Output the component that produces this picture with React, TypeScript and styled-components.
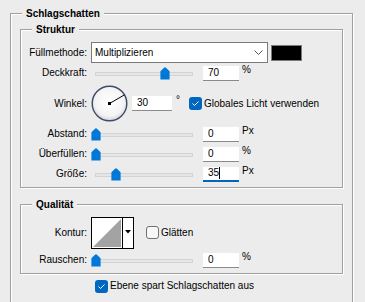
import React from 'react';
import styled, { createGlobalStyle } from 'styled-components';

const GlobalStyle = createGlobalStyle`
  html, body {
    margin: 0;
    padding: 0;
    overflow: hidden;
    background: #ececec;
  }

  body {
    font-family: 'Liberation Sans', Arial, sans-serif;
    font-size: 10px;
    color: #000;
  }
`;

const Panel = styled.div`
  width: 365px;
  box-sizing: border-box;
  padding: 7px 12px 0 10px;
`;

const Group = styled.fieldset<{ $inner?: boolean; $pad: string; $top?: number }>`
  margin: ${(p) => (p.$inner ? `${p.$top ?? 0}px 9px 0` : '0')};
  padding: ${(p) => p.$pad};
  border: 1px solid #a0a0a0;
  box-shadow: 1px 1px 0 #fff, inset 1px 1px 0 #fff;
  min-inline-size: 0;
`;

const Legend = styled.legend`
  margin-left: 11px;
  padding: 0 4px;
  font-weight: bold;
  line-height: 13px;
  background: #ececec;
`;

const Row = styled.div<{ $h: number }>`
  display: grid;
  grid-template-columns: 66px auto;
  column-gap: 4px;
  align-items: center;
  height: ${(p) => p.$h}px;
`;

const Label = styled.span`
  text-align: right;
  white-space: nowrap;
  line-height: 12px;
`;

const Controls = styled.div`
  display: flex;
  align-items: center;
`;

const Select = styled.div`
  width: 177px;
  height: 21px;
  box-sizing: border-box;
  border: 1px solid #7a7a7a;
  background: #fff;
  display: flex;
  align-items: center;
  justify-content: space-between;
  padding: 0 4px 0 3px;
  margin-right: 3px;
`;

const Swatch = styled.div`
  width: 31px;
  height: 16px;
  box-sizing: border-box;
  border: 1px solid #7a7a7a;
  background: #000;
`;

const SliderBox = styled.div`
  position: relative;
  width: 106px;
  height: 13px;
  margin-right: 6px;
  display: flex;
  align-items: flex-start;
  padding: 5px 4px 0;
  box-sizing: border-box;
`;

const Track = styled.div`
  flex: 1;
  height: 4px;
  box-sizing: border-box;
  background: #e6e6e6;
  border: 1px solid #d3d3d3;
`;

const Thumb = styled.svg`
  position: absolute;
  top: 0;
  width: 10px;
  height: 13px;
`;

const Field = styled.div<{ $w: number; $focus?: boolean }>`
  width: ${(p) => p.$w}px;
  height: 15px;
  box-sizing: border-box;
  background: #fff;
  border-bottom: ${(p) => (p.$focus ? '2px solid #0067c0' : '1px solid #8a8a8a')};
  padding-left: 5px;
  display: flex;
  align-items: center;
  line-height: 12px;
`;

const Caret = styled.span`
  width: 1px;
  height: 12px;
  background: #000;
`;

const Unit = styled.span`
  margin-left: 3px;
  margin-bottom: 6px;
  line-height: 12px;
`;

const Degree = styled.span`
  margin: 0 9px 8px 4px;
  line-height: 12px;
`;

const Dial = styled.svg`
  width: 37px;
  height: 37px;
  margin-right: 4px;
`;

const CheckBox = styled.span<{ $on?: boolean }>`
  width: 13px;
  height: 13px;
  box-sizing: border-box;
  border-radius: 3px;
  background: ${(p) => (p.$on ? '#0067c0' : '#f7f7f7')};
  border: ${(p) => (p.$on ? 'none' : '1px solid #707070')};
  display: inline-flex;
  align-items: center;
  justify-content: center;
  flex: none;
`;

const CheckText = styled.span`
  margin-left: 2px;
  line-height: 12px;
  white-space: nowrap;
`;

const Contour = styled.div`
  width: 43px;
  height: 32px;
  box-sizing: border-box;
  border: 1px solid #000;
  background: #fff;
  display: flex;
  margin-right: 12px;
`;

const ContourArrow = styled.div`
  flex: 1;
  border-left: 1px solid #000;
  display: flex;
  align-items: center;
  justify-content: center;
  padding-bottom: 2px;
`;

const FootRow = styled.div`
  display: flex;
  align-items: center;
  height: 20px;
  margin-top: 2px;
  padding-left: 84px;
`;

const Check = ({ on, text }: { on?: boolean; text: string }) => (
  <>
    <CheckBox $on={on}>
      {on && (
        <svg width="11" height="11" viewBox="0 0 11 11">
          <polyline points="2.5,5.5 4.5,7.5 8.5,3.5" fill="none" stroke="#fff" strokeWidth="1" />
        </svg>
      )}
    </CheckBox>
    <CheckText>{text}</CheckText>
  </>
);

const Slider = ({ pos }: { pos: number }) => (
  <SliderBox>
    <Track />
    <Thumb viewBox="0 0 10 13" style={{ left: Math.round(pos * 98) }}>
      <path d="M5 0.3 Q5.6 0.3 6.2 0.9 L9.6 4.2 V12.6 H0.4 V4.2 L3.8 0.9 Q4.4 0.3 5 0.3 Z" fill="#0078d7" />
    </Thumb>
  </SliderBox>
);

const SliderRow = ({ label, pos, value, unit, focus, h = 20 }: { label: string; pos: number; value: string; unit: string; focus?: boolean; h?: number }) => (
  <Row $h={h}>
    <Label>{label}</Label>
    <Controls>
      <Slider pos={pos} />
      <Field $w={36} $focus={focus}>
        {value}
        {focus && <Caret />}
      </Field>
      <Unit>{unit}</Unit>
    </Controls>
  </Row>
);

const App: React.FC = () => {
  const a = (30 * Math.PI) / 180;
  return (
    <>
      <GlobalStyle />
      <Panel>
        <Group $pad="3px 0 6px">
          <Legend>Schlagschatten</Legend>
          <Group $inner $pad="6px 0 3px">
            <Legend>Struktur</Legend>
            <Row $h={21}>
              <Label>Füllmethode:</Label>
              <Controls>
                <Select>
                  <span>Multiplizieren</span>
                  <svg width="9" height="5" viewBox="0 0 9 5">
                    <polyline points="0.5,0.5 4.5,4.5 8.5,0.5" fill="none" stroke="#555" strokeWidth="1" />
                  </svg>
                </Select>
                <Swatch />
              </Controls>
            </Row>
            <SliderRow label="Deckkraft:" pos={0.7} value="70" unit="%" />
            <Row $h={41}>
              <Label>Winkel:</Label>
              <Controls>
                <Dial viewBox="0 0 37 37">
                  <defs>
                    <radialGradient id="dialFill" cx="50%" cy="45%" r="55%">
                      <stop offset="0%" stopColor="#ffffff" />
                      <stop offset="75%" stopColor="#f4f4f4" />
                      <stop offset="100%" stopColor="#d4d4d8" />
                    </radialGradient>
                  </defs>
                  <circle cx="18.5" cy="18.5" r="17.3" fill="url(#dialFill)" stroke="#3d4a6c" strokeWidth="1.4" />
                  <line x1="18.5" y1="18.5" x2={18.5 + 16.8 * Math.cos(a)} y2={18.5 - 16.8 * Math.sin(a)} stroke="#000" strokeWidth="1" />
                  <rect x="17" y="17" width="3" height="3" fill="#000" />
                </Dial>
                <Field $w={40}>30</Field>
                <Degree>°</Degree>
                <Check on text="Globales Licht verwenden" />
              </Controls>
            </Row>
            <SliderRow label="Abstand:" pos={0} value="0" unit="Px" />
            <SliderRow label="Überfüllen:" pos={0} value="0" unit="%" />
            <SliderRow label="Größe:" pos={0.2} value="35" unit="Px" focus />
          </Group>
          <Group $inner $top={10} $pad="5px 0 2px">
            <Legend>Qualität</Legend>
            <Row $h={33}>
              <Label>Kontur:</Label>
              <Controls>
                <Contour>
                  <svg width="30" height="30" viewBox="0 0 30 30">
                    <polygon points="1,29 29,1 29,29" fill="#a3a3a3" />
                  </svg>
                  <ContourArrow>
                    <svg width="6" height="4" viewBox="0 0 6 4">
                      <polygon points="0,0 6,0 3,3.5" fill="#000" />
                    </svg>
                  </ContourArrow>
                </Contour>
                <Check text="Glätten" />
              </Controls>
            </Row>
            <SliderRow label="Rauschen:" pos={0} value="0" unit="%" h={22} />
          </Group>
          <FootRow>
            <Check on text="Ebene spart Schlagschatten aus" />
          </FootRow>
        </Group>
      </Panel>
    </>
  );
};

export default App;
